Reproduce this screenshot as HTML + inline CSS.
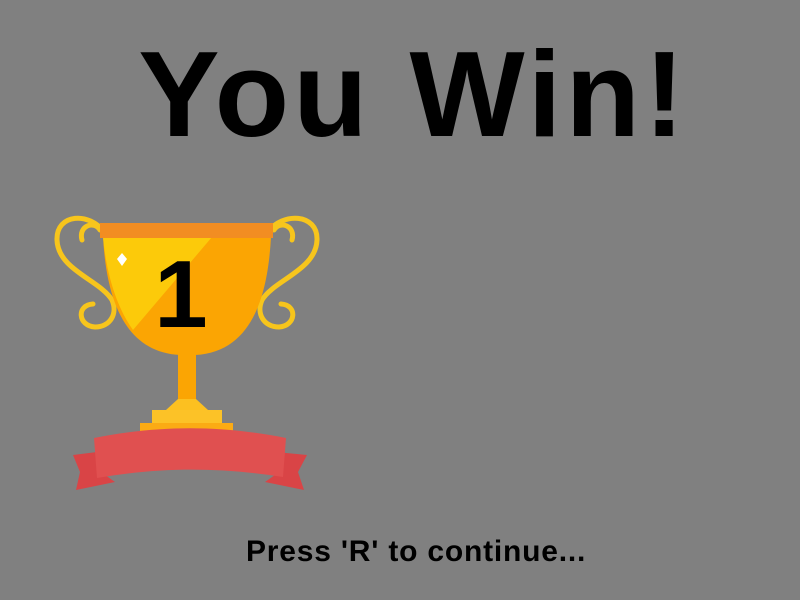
<!DOCTYPE html>
<html><head><meta charset="utf-8"><style>
html,body{margin:0;padding:0;}
body{width:800px;height:600px;background:#808080;position:relative;overflow:hidden;font-family:"Liberation Sans",Arial,sans-serif;}
.t{position:absolute;left:0;width:827px;text-align:center;top:19px;font-size:122px;font-weight:bold;line-height:150px;color:#000;white-space:nowrap;letter-spacing:4px;}
.p{position:absolute;left:246px;top:537px;font-size:30px;line-height:30px;font-weight:bold;color:#000;white-space:nowrap;letter-spacing:0.8px;}
svg{position:absolute;left:0;top:0;}
</style></head><body>
<div class="t">You Win!</div>
<svg width="800" height="600" viewBox="0 0 800 600">
 <g fill="none" stroke="#f7c51c" stroke-width="5" stroke-linecap="round">
  <path d="M104 232 C90 212 56 213 57 240 C58 270 100 280 112 300 C118 314 110 327 95 327 C78 326 76 305 93 304"/>
  <path d="M82 240 C78 226 94 220 100 230"/>
  <path d="M268 232 C282 212 318 213 317 240 C316 270 274 280 262 300 C256 314 264 327 279 327 C296 326 298 305 281 304"/>
  <path d="M292 240 C296 226 280 220 274 230"/>
 </g>
 <path d="M103 237 L271 237 C268 290 255 352 195 355 L180 355 C120 352 106 290 103 237 Z" fill="#fba503"/>
 <path d="M103 237 L212 237 L133 330 C115 305 106 270 103 237 Z" fill="#fcca0a"/>
 <rect x="100" y="223" width="173" height="15" fill="#f28d22"/>
 <path d="M122 253 L127 259 L122 266 L117 259 Z" fill="#fff"/>
 <rect x="178" y="354" width="18" height="45" fill="#fba503"/>
 <path d="M178 399 L196 399 L208 410 L166 410 Z" fill="#fcc020"/>
 <rect x="152" y="410" width="70" height="13" fill="#fcc227"/>
 <rect x="140" y="423" width="93" height="9" fill="#fbab14"/>
 <path d="M97 452 L73 455 L80 472 L76 490 L115 482 L98 470 Z" fill="#d94446"/>
 <path d="M276 452 L307 455 L298 472 L304 490 L265 482 L282 470 Z" fill="#d94446"/>
 <path d="M94 438 C160 425 220 425 286 438 L283 477 C220 467 160 467 97 478 Z" fill="#e05050"/>
 <text x="181" y="327" text-anchor="middle" font-family="Liberation Sans,Arial,sans-serif" font-weight="bold" font-size="96" fill="#000">1</text>
</svg>
<div class="p">Press 'R' to continue...</div>
</body></html>
